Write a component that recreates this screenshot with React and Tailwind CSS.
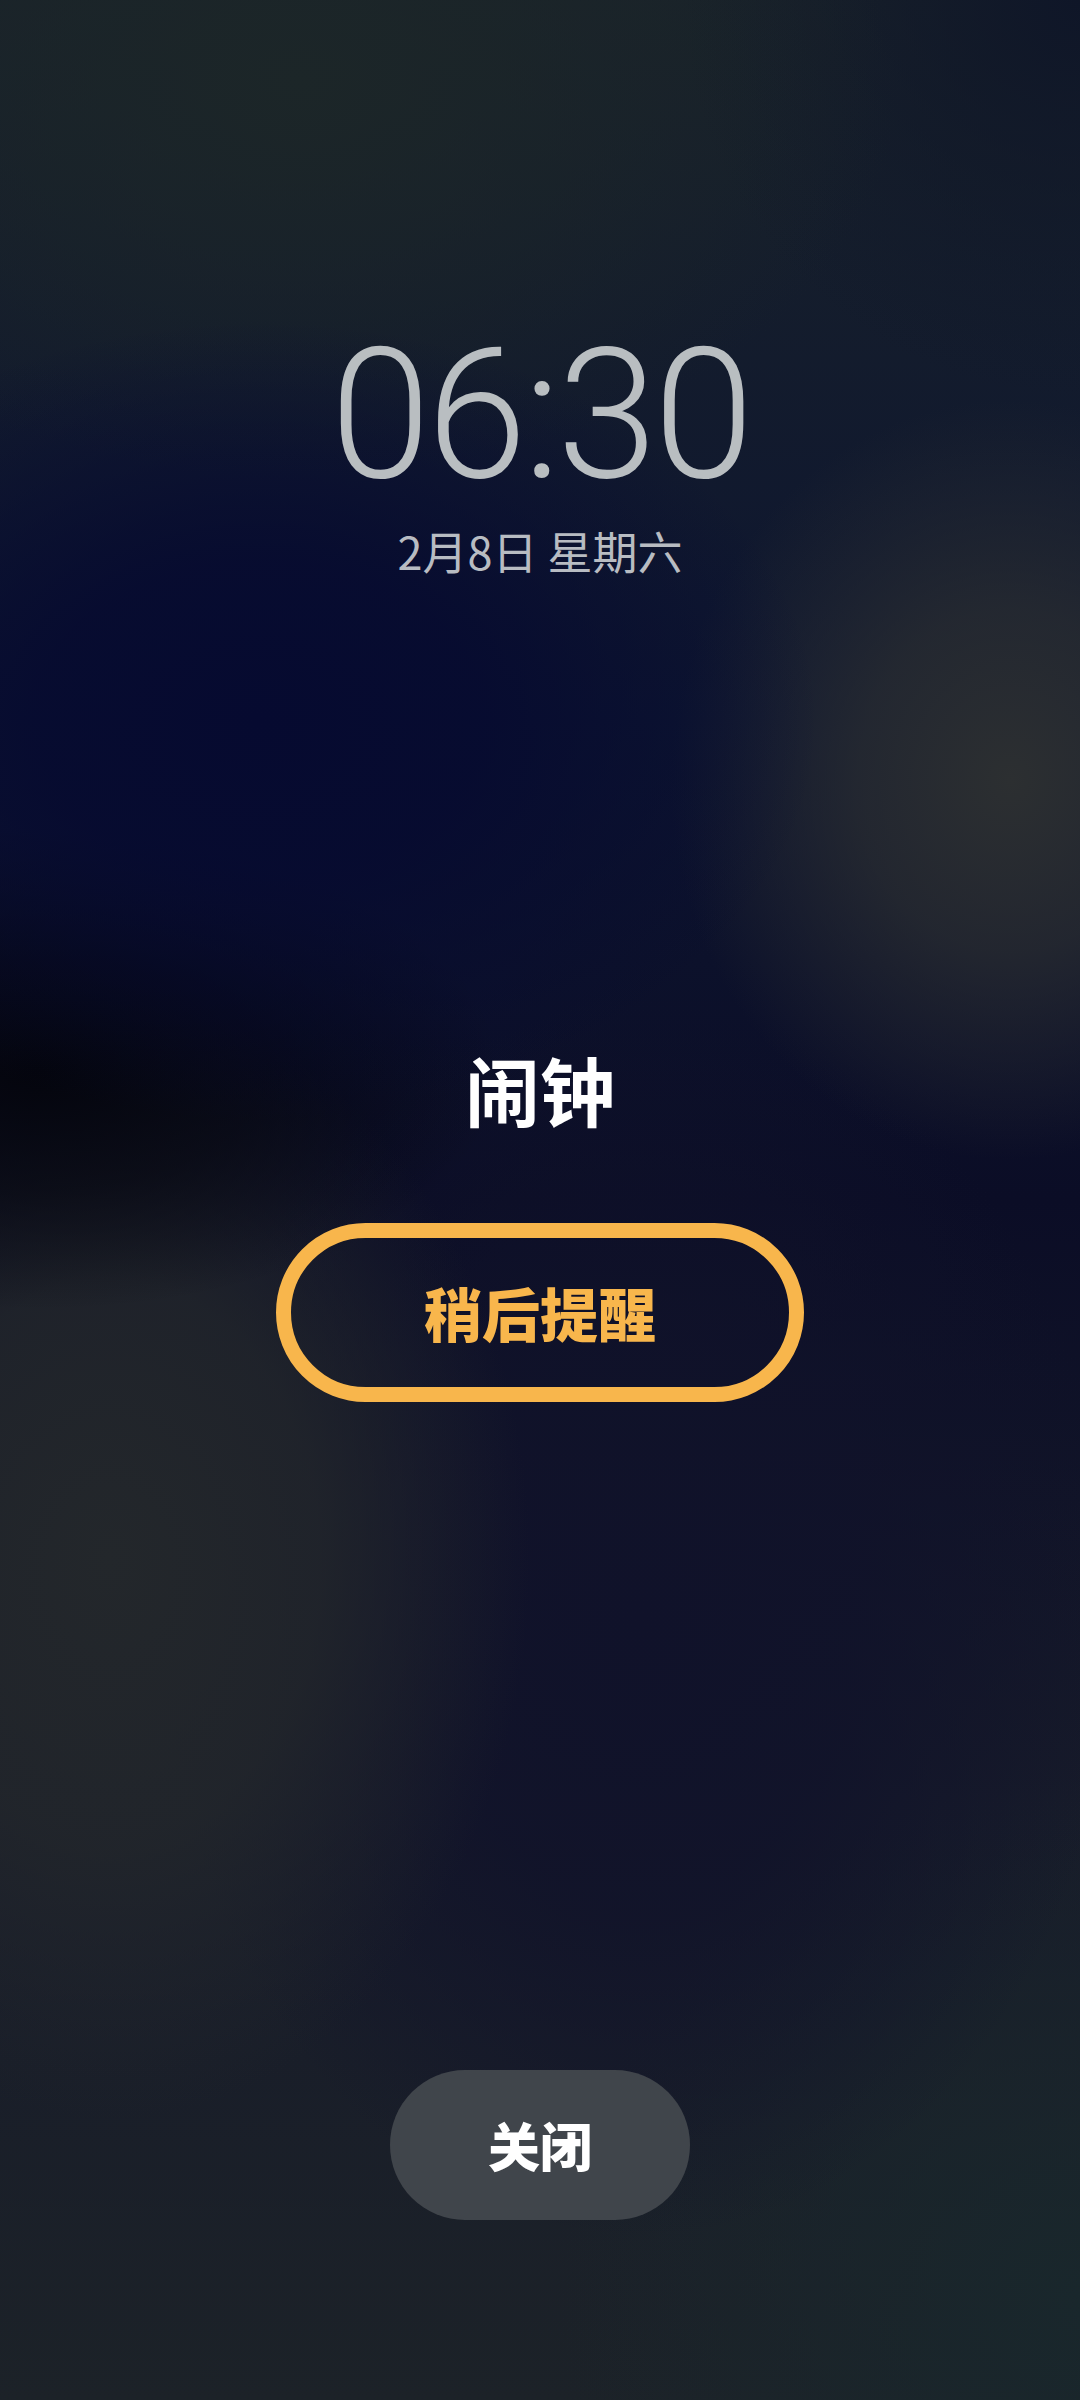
export default function App() {
  return (
    <div className="relative w-[1080px] h-[2400px] overflow-hidden flex flex-col items-center bg-[#161c26] bg-[radial-gradient(ellipse_560px_400px_at_260px_720px,#060a30_0%,rgba(6,10,48,0.85)_40%,rgba(6,10,48,0)_100%),radial-gradient(ellipse_340px_380px_at_1010px_780px,#2c2f31_0%,rgba(44,47,49,0.7)_45%,rgba(44,47,49,0)_100%),radial-gradient(ellipse_460px_240px_at_40px_1070px,#04050d_0%,rgba(4,5,13,0.6)_50%,rgba(4,5,13,0)_100%),radial-gradient(ellipse_420px_560px_at_110px_1560px,#23272b_0%,rgba(35,39,43,0.8)_50%,rgba(35,39,43,0)_100%),radial-gradient(ellipse_480px_620px_at_640px_1620px,#10122a_0%,rgba(16,18,42,0.8)_45%,rgba(16,18,42,0)_100%),radial-gradient(ellipse_520px_520px_at_1080px_2300px,#19272c_0%,rgba(25,39,44,0)_100%),radial-gradient(ellipse_600px_400px_at_300px_80px,#1c2628_0%,rgba(28,38,40,0)_100%),radial-gradient(ellipse_400px_400px_at_1080px_0px,#0f1628_0%,rgba(15,22,40,0)_100%),linear-gradient(180deg,#19222a_0%,#0d1530_30%,#0b0d26_50%,#171b2a_75%,#1c2228_100%)]">
      <div className="mt-[325px] text-[181px] leading-none font-light text-[#b9bec1] tracking-[-4px] font-['Roboto','Noto_Sans',sans-serif]">
        06:30
      </div>
      <div className="mt-[22px] text-[45px] leading-none text-[#b8bcc2] font-['Noto_Sans_CJK_SC','Noto_Sans',sans-serif]">
        2月8日 星期六
      </div>
      <div className="mt-[478px] text-[75px] leading-none font-bold text-white font-['Noto_Sans_CJK_SC',sans-serif]">
        闹钟
      </div>
      <div className="mt-[97px] w-[528px] h-[179px] rounded-full border-[15px] border-[#f8b64c] flex items-center justify-center text-[58px] font-black text-[#f8b64c] font-['Noto_Sans_CJK_SC',sans-serif]">
        稍后提醒
      </div>
      <div className="flex-1" />
      <div className="mb-[180px] w-[300px] h-[150px] rounded-full bg-[#40454b] flex items-center justify-center text-[52px] font-black text-white font-['Noto_Sans_CJK_SC',sans-serif]">
        关闭
      </div>
    </div>
  );
}
